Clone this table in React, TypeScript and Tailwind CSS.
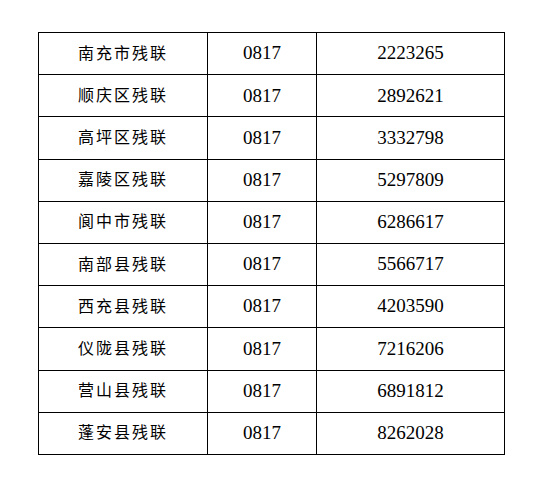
const rows = [
  ['南充市残联', '0817', '2223265'],
  ['顺庆区残联', '0817', '2892621'],
  ['高坪区残联', '0817', '3332798'],
  ['嘉陵区残联', '0817', '5297809'],
  ['阆中市残联', '0817', '6286617'],
  ['南部县残联', '0817', '5566717'],
  ['西充县残联', '0817', '4203590'],
  ['仪陇县残联', '0817', '7216206'],
  ['营山县残联', '0817', '6891812'],
  ['蓬安县残联', '0817', '8262028'],
];

export default function App() {
  return (
    <div className="w-[540px] h-[485px] bg-white pt-[32px] pl-[38px]">
      <table className="border-collapse text-black font-['Liberation_Serif','Noto_Sans_CJK_SC',serif]">
        <tbody>
          {rows.map((r) => (
            <tr key={r[0]} className="h-[42.2px]">
              <td className="w-[169px] border border-black text-center text-[16px] tracking-[2px] p-0">{r[0]}</td>
              <td className="w-[109px] border border-black text-center text-[19px] p-0">{r[1]}</td>
              <td className="w-[188px] border border-black text-center text-[19px] p-0">{r[2]}</td>
            </tr>
          ))}
        </tbody>
      </table>
    </div>
  );
}
